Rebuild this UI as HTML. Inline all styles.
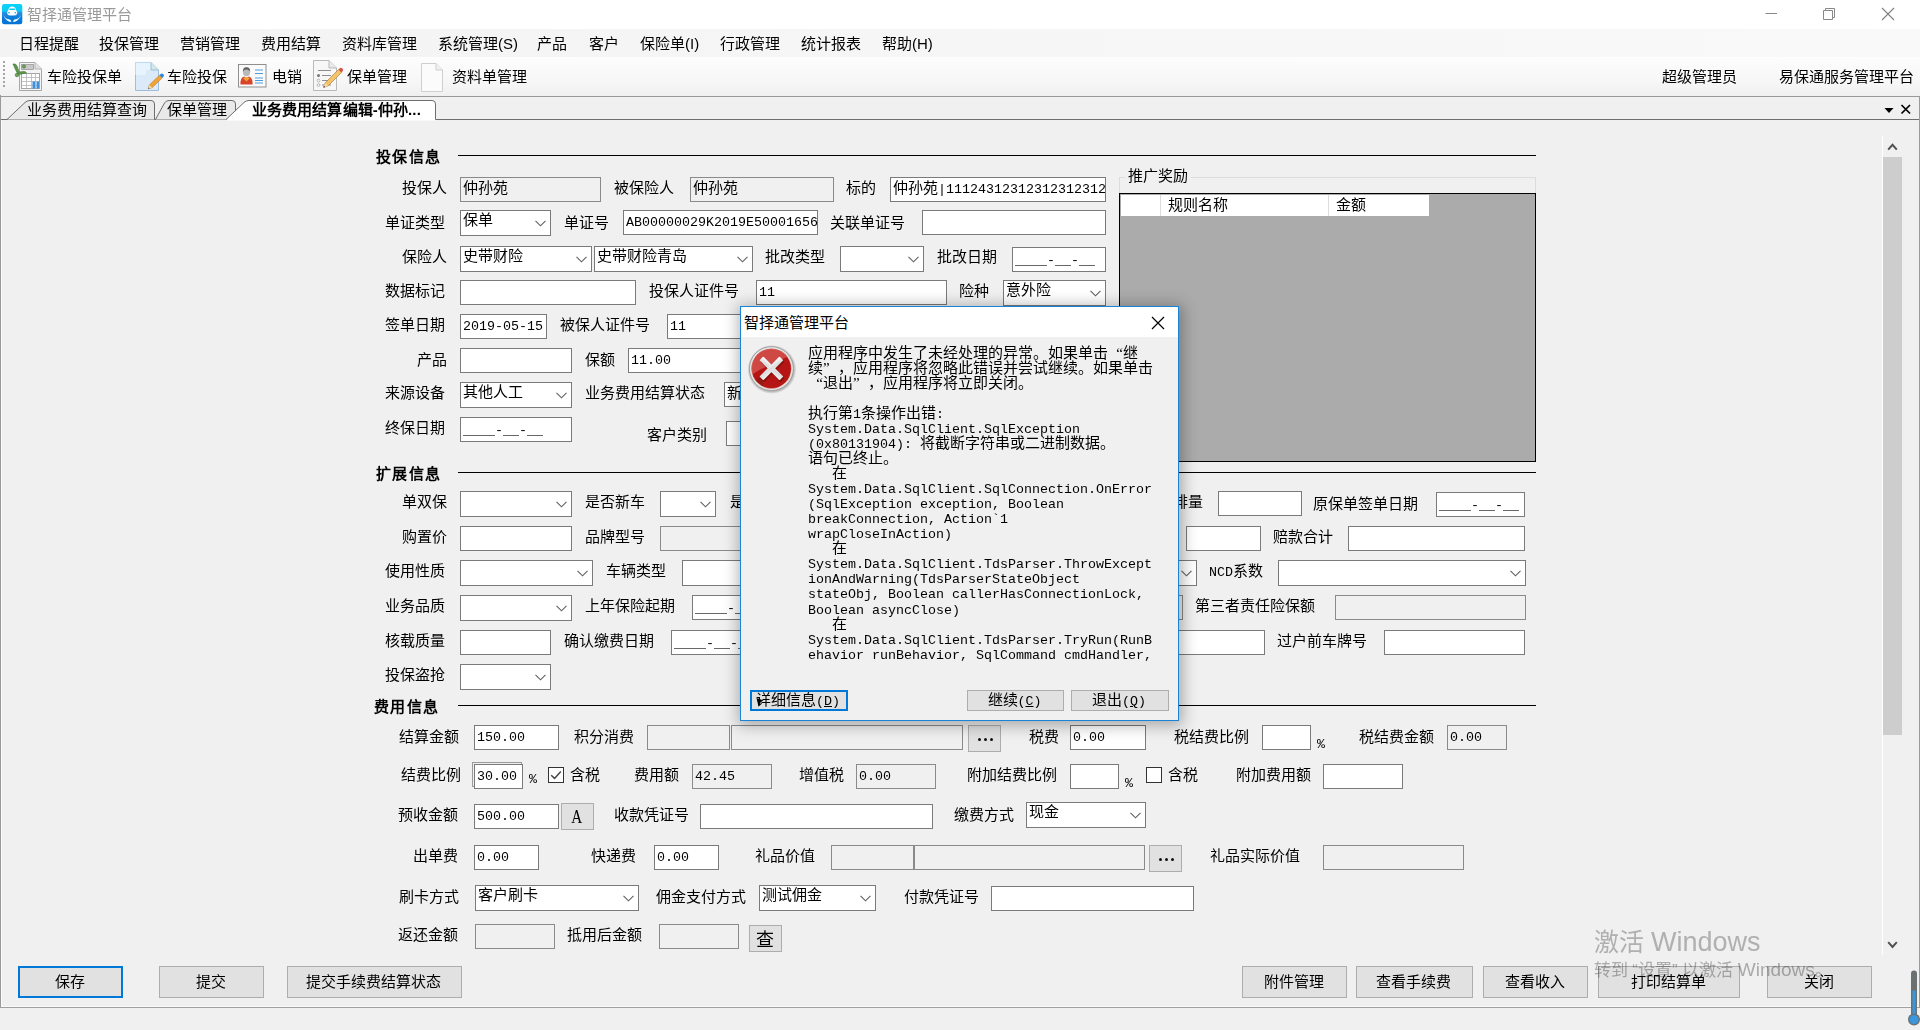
<!DOCTYPE html>
<html lang="zh-CN"><head><meta charset="utf-8"><title>智择通管理平台</title>
<style>
html,body{margin:0;padding:0}
body{width:1920px;height:1030px;overflow:hidden;background:#f0f0f0;position:relative;font-family:"Liberation Sans",sans-serif;color:#000}
.abs{position:absolute}
.l{position:absolute;font:15px/18px "Liberation Serif",serif;height:18px;white-space:nowrap;color:#000}
.m{font-family:"Liberation Mono",monospace;font-size:13.34px}
.pc .m{font-size:13.34px}
.dt3{position:absolute;top:12px;width:3px;height:3px;border-radius:1.5px;background:#111}
.h{position:absolute;font:bold 15px/18px "Liberation Serif",serif;height:18px;white-space:nowrap;letter-spacing:1.3px}
.i{position:absolute;box-sizing:border-box;border:1px solid #7a7a7a;background:#fff;overflow:hidden;font:15px/18px "Liberation Serif",serif;white-space:nowrap}
.i .t{position:absolute;left:2px;top:1px}
.i.c .t{top:0px}
.i.dt .t{top:2px}
.i.d{background:#f0f0f0;border-color:#8a8a8a}
.ar{position:absolute;right:4px;top:9px}
.b{position:absolute;box-sizing:border-box;border:1px solid #adadad;background:#e1e1e1;text-align:center;font:15px "Liberation Sans",sans-serif;white-space:nowrap;overflow:hidden;padding-right:2px}
.b.f{border:2px solid #0078d7;}
.b.f span{position:relative;top:-1px}
.dots{font-size:9px;letter-spacing:0px;position:relative;top:-1px}
.k{position:absolute;width:16px;height:16px;box-sizing:border-box;border:1px solid #333;background:#fff}
.menu span{position:absolute;top:34px;font:15px/20px "Liberation Sans",sans-serif;white-space:nowrap}
.tb span{position:absolute;top:67px;font:15px/20px "Liberation Sans",sans-serif;white-space:nowrap}
.q{display:inline-block;width:15px}.q.o{text-align:right}.q.c{text-align:left}
.dl{position:absolute;left:67px;height:16px;font:15px/16px "Liberation Serif",serif;white-space:pre}
</style></head><body>
<!-- title bar -->
<div class="abs" style="left:0;top:0;width:1920px;height:29px;background:#fff"></div>
<svg class="abs" style="left:2px;top:4px" width="21" height="21" viewBox="0 0 21 21">
<defs><linearGradient id="ig" x1="0" y1="0" x2="0" y2="1"><stop offset="0" stop-color="#0ad2fa"/><stop offset="0.36" stop-color="#0ccaf6"/><stop offset="0.40" stop-color="#2f8fe0"/><stop offset="0.7" stop-color="#0a7cdc"/><stop offset="1" stop-color="#0073d4"/></linearGradient></defs>
<rect x="0" y="0" width="20.300" height="20.3" rx="2.200" fill="url(#ig)"/>
<path d="M6.200 6.5 Q6.8 2.600 10.200 2.600 Q13.600 2.6 14.200 6.500 L15.200 8 L15.200 9.6 Q14.6 11 13 11.500 L7.4 11.5 Q5.800 11 5.2 9.600 L5.2 8 Z" fill="#fff"/>
<rect x="7.300" y="4.600" width="5.800" height="1.500" rx="0.500" fill="#10c4f5"/>
<rect x="6.300" y="8" width="1.500" height="1.400" fill="#18b8f2"/><rect x="12.600" y="8" width="1.500" height="1.400" fill="#18b8f2"/>
<path d="M1.200 10.200 Q2.600 14.800 8 15.600 L9.600 17.600 L8.200 18 Q3 16.500 1.200 10.200Z" fill="#fff" opacity="0.950"/>
<path d="M19.200 10.200 Q17.800 14.800 12.400 15.600 L10.800 17.600 L12.200 18 Q17.400 16.500 19.200 10.200Z" fill="#fff" opacity="0.950"/>
<path d="M7.400 11.5 Q10.200 13 13 11.500 L12 13 Q10.200 13.800 8.400 13Z" fill="#0a78d8"/>
</svg>
<div class="abs" style="left:27px;top:5px;font:15px/20px 'Liberation Sans',sans-serif;color:#999">智择通管理平台</div>
<svg class="abs" style="left:1760px;top:4px" width="150" height="22" viewBox="0 0 150 22">
<path d="M5.5 9.5 H17" stroke="#888" stroke-width="1" fill="none"/>
<path d="M63.5 6.5 h9 v9 h-9 z M65.5 6.500 v-2 h9 v9 h-2" stroke="#888" stroke-width="1" fill="none"/>
<path d="M122 4 L134 16 M134 4 L122 16" stroke="#808080" stroke-width="1.1" fill="none"/>
</svg>
<!-- menu bar -->
<div class="abs" style="left:0;top:29px;width:1920px;height:28px;background:linear-gradient(90deg,#f3f3f3,#f9f9f9)"></div>
<div class="menu">
<span style="left:19px">日程提醒</span><span style="left:99px">投保管理</span><span style="left:180px">营销管理</span><span style="left:261px">费用结算</span><span style="left:342px">资料库管理</span><span style="left:438px">系统管理(S)</span><span style="left:537px">产品</span><span style="left:589px">客户</span><span style="left:640px">保险单(I)</span><span style="left:720px">行政管理</span><span style="left:801px">统计报表</span><span style="left:882px">帮助(H)</span>
</div>
<!-- toolbar -->
<div class="abs" style="left:0;top:57px;width:1920px;height:39px;background:linear-gradient(#fdfdfd,#f7f7f7 60%,#f0f0f0)"></div>
<div class="abs" style="left:0;top:96px;width:1920px;height:1px;background:#999"></div>
<div class="abs" style="left:3px;top:61px;width:2px;height:27px;background:repeating-linear-gradient(#a5a5a5 0 2px,transparent 2px 4px)"></div>
<div class="tb">
<span style="left:47px">车险投保单</span><span style="left:167px">车险投保</span><span style="left:272px">电销</span><span style="left:347px">保单管理</span><span style="left:452px">资料单管理</span><span style="left:1662px">超级管理员</span><span style="left:1779px">易保通服务管理平台</span>
</div>

<!-- icon1: spreadsheet -->
<svg class="abs" style="left:12px;top:61px" width="31" height="31" viewBox="0 0 31 31">
<path d="M7.5 1.500 H23 L29.5 8 V29.5 H7.5 Z" fill="#f4f4f4" stroke="#a8a8a8" stroke-width="1"/>
<path d="M23 1.5 V8 H29.5" fill="#e2e2e2" stroke="#b4b4b4" stroke-width="1"/>
<rect x="9.500" y="3.5" width="12" height="5" fill="#c9c9c9" stroke="#9a9a9a" stroke-width="0.8"/>
<rect x="9.5" y="12.500" width="18" height="15" fill="#fff" stroke="#9c9c9c" stroke-width="0.9"/>
<path d="M9.5 16.5 H27.5 M9.500 20.5 H27.5 M9.5 24.5 H27.5 M14.500 12.5 V27.5 M19.5 12.5 V27.5 M23.5 12.5 V27.5" stroke="#b5b5b5" stroke-width="0.8" fill="none"/>
<rect x="20.5" y="20.500" width="2.600" height="7" fill="#3f8fdd"/><rect x="24.5" y="20.5" width="2.6" height="7" fill="#3f8fdd"/>
<path d="M1 3 Q4 2 5.5 6 L7 11 L12 10.500 Q14 10.5 14.5 12 L9 13 L6 13.5 Q3.5 9 1 3Z" fill="#5d9a4a" stroke="#3f6f33" stroke-width="0.6"/>
<circle cx="5" cy="14" r="1.800" fill="#6aa556" stroke="#3f6f33" stroke-width="0.6"/><circle cx="12" cy="5.5" r="1.6" fill="#6aa556" stroke="#3f6f33" stroke-width="0.6"/>
</svg>
<!-- icon2: page with pencil -->
<svg class="abs" style="left:134px;top:61px" width="31" height="32" viewBox="0 0 31 32">
<path d="M1.500 1.5 H17 L24.5 9 V29.5 H1.5 Z" fill="#dbeaf8" stroke="#9dbfdc" stroke-width="1"/>
<path d="M1.5 1.500 H17 V9 H12 V14 H1.5Z" fill="#e8f5fd" opacity="0.9"/>
<path d="M17 1.5 V9 H24.5" fill="#cfe9e4" stroke="#9dbfdc" stroke-width="1"/>
<path d="M14.2 27.8 L15.3 24 L25.5 14.2 L28.2 17 L18 26.700 Z" fill="#f0a23c" stroke="#c57a1e" stroke-width="0.6"/>
<path d="M25.5 14.2 L27 12.800 Q28 12 29 13 L29.6 13.600 Q30.4 14.6 29.6 15.5 L28.2 17Z" fill="#2f86e0"/>
<path d="M14.200 27.8 L15.3 24 L18 26.7Z" fill="#f3dcb5"/><path d="M14.2 27.8 L14.6 26.400 L15.6 27.4Z" fill="#333"/>
</svg>
<!-- icon3: contact card -->
<svg class="abs" style="left:238px;top:64px" width="29" height="25" viewBox="0 0 29 25">
<rect x="0.5" y="0.5" width="27.5" height="22.500" fill="#fafafa" stroke="#8f8f8f" stroke-width="1"/>
<path d="M17 6 H25 M17 9.500 H25 M17 14 H25 M17 16.5 H25 M17 19 H25" stroke="#4e9bd8" stroke-width="1.1" fill="none"/>
<path d="M2.500 20.5 Q2 14 6 12.5 L8.5 14 L11 12.5 Q15 14 14.5 20.5 Z" fill="#d8432a"/>
<path d="M5 14 L8.500 17.500 L12 14 L8.5 13Z" fill="#f0a23c"/>
<ellipse cx="8.5" cy="8" rx="3.600" ry="4.200" fill="#b9b9b9"/><path d="M4.8 7.500 Q5 3 8.500 3.200 Q12 3 12.2 7.5 Q10 5 8.5 5.500 Q6.5 5 4.8 7.5Z" fill="#5f5f5f"/>
</svg>
<!-- icon4: list page + pencil -->
<svg class="abs" style="left:312px;top:60px" width="32" height="32" viewBox="0 0 32 32">
<path d="M1.5 0.500 H17 L24.5 8 V30.5 H1.5 Z" fill="#f7f7f7" stroke="#b9b9b9" stroke-width="1"/>
<path d="M17 0.5 V8 H24.5" fill="#e9e9e9" stroke="#b9b9b9" stroke-width="1"/>
<path d="M6 10.5 H19 M10 15.500 H19 M10 20.5 H19 M10 25 H19" stroke="#8e8e8e" stroke-width="1.2" fill="none"/>
<circle cx="6.500" cy="15.5" r="1.5" fill="#777"/><circle cx="6.5" cy="20.500" r="1.4" fill="#fff" stroke="#999" stroke-width="0.7"/><circle cx="6.5" cy="25" r="1.400" fill="#fff" stroke="#999" stroke-width="0.700"/>
<path d="M11.500 27.5 L13 23 L26.500 9.500 L29.500 12.500 L16 26 Z" fill="#f3c36b" stroke="#a8772c" stroke-width="0.6"/>
<path d="M26.5 9.5 L28 8 Q29 7.200 30 8.200 L30.800 9 Q31.5 10 30.800 11 L29.5 12.5Z" fill="#d9534f"/>
<path d="M11.5 27.500 L13 23 L16 26Z" fill="#f3dcb5"/><path d="M11.5 27.5 L12 25.800 L13.200 27Z" fill="#333"/>
</svg>
<!-- icon5: blank page -->
<svg class="abs" style="left:420px;top:63px" width="24" height="30" viewBox="0 0 24 30">
<path d="M1.500 0.5 H16 L22.5 7 V28.500 H1.5 Z" fill="#fbfbfb" stroke="#cfcfcf" stroke-width="1"/>
<path d="M16 0.500 V7 H22.5" fill="#f0f0f0" stroke="#cfcfcf" stroke-width="1"/>
</svg>

<!-- tab strip -->
<div class="abs" style="left:0;top:97px;width:1920px;height:23px;background:#f0f0f0"></div>
<svg class="abs" style="left:0;top:97px" width="1920" height="24" viewBox="0 0 1920 24">
<path d="M0 22.5 H1920" stroke="#6e6e6e" stroke-width="1" fill="none"/>
<path d="M7 22.5 L25 5.5 Q27 3.5 30 3.5 H151 Q154.5 3.5 154.5 7 V22.5" fill="#e9e9e9" stroke="#6e6e6e" stroke-width="1"/>
<path d="M155.500 22.5 L164.500 6 Q166 3.5 169 3.5 H232 Q235.500 3.5 235.5 7 V22.5" fill="#e9e9e9" stroke="#6e6e6e" stroke-width="1"/>
<path d="M226 23.500 L244 5.5 Q246 3.5 249 3.5 H432 Q435.5 3.5 435.5 7 V23.5 Z" fill="#fff" stroke="none"/>
<path d="M226 22.5 L244 5.5 Q246 3.5 249 3.5 H432 Q435.5 3.5 435.5 7 V22.5" fill="none" stroke="#6e6e6e" stroke-width="1"/>
<path d="M1884.500 11 h9 l-4.500 5 z" fill="#000"/>
<path d="M1901.500 8 l8.500 8.500 m0 -8.500 l-8.500 8.500" stroke="#000" stroke-width="1.700" fill="none"/>
</svg>
<div class="abs" style="left:27px;top:100px;font:15px/20px 'Liberation Sans',sans-serif;white-space:nowrap">业务费用结算查询</div>
<div class="abs" style="left:167px;top:100px;font:15px/20px 'Liberation Sans',sans-serif;white-space:nowrap">保单管理</div>
<div class="abs" style="left:252px;top:100px;font:bold 15px/20px 'Liberation Sans',sans-serif;letter-spacing:0.1px;white-space:nowrap">业务费用结算编辑-仲孙...</div>
<!-- page frame -->
<div class="abs" style="left:0px;top:95px;width:1px;height:913px;background:#9a9a9a"></div><div class="abs" style="left:1px;top:120px;width:1px;height:887px;background:#fafafa"></div>
<div class="abs" style="left:1px;top:1006px;width:1919px;height:1px;background:#fafafa"></div><div class="abs" style="left:0px;top:1007px;width:1920px;height:1px;background:#a0a0a0"></div>
<!-- scrollbar -->
<div class="abs" style="left:1882px;top:136px;width:1px;height:819px;background:#fff"></div>
<div class="abs" style="left:1883px;top:157px;width:19px;height:578px;background:#cdcdcd"></div>
<svg class="abs" style="left:1883px;top:136px" width="19" height="820" viewBox="0 0 19 820"><path d="M5.200 13.600 L9.5 8.800 L13.800 13.600" stroke="#505050" stroke-width="2" fill="none"/><path d="M5.200 6.200 L9.5 11 L13.800 6.200" transform="translate(0 800)" stroke="#505050" stroke-width="2" fill="none"/></svg>
<div class="abs" style="left:1919px;top:96px;width:1px;height:912px;background:#9a9a9a"></div>
<div class="h" style="left:376px;top:148px">投保信息</div>
<div style="position:absolute;left:458px;top:155px;width:1078px;height:1px;background:#000"></div>
<div class="l " style="right:1473px;top:179px">投保人</div>
<div class="i d" style="left:460px;top:177px;width:141px;height:25px"><span class="t">仲孙苑</span></div>
<div class="l " style="left:614px;top:179px">被保险人</div>
<div class="i d" style="left:690px;top:177px;width:144px;height:25px"><span class="t">仲孙苑</span></div>
<div class="l " style="left:846px;top:179px">标的</div>
<div class="i" style="left:890px;top:177px;width:216px;height:25px"><span class="t">仲孙苑<span class="m">|111243123123123123123</span></span></div>
<div class="l " style="right:1475px;top:214px">单证类型</div>
<div class="i c" style="left:460px;top:210px;width:91px;height:26px"><span class="t">保单</span><svg class="ar" width="11" height="7" viewBox="0 0 11 7"><path d="M0.5 0.8 L5.5 5.8 L10.5 0.8" fill="none" stroke="#606060" stroke-width="1.1"/></svg></div>
<div class="l " style="left:564px;top:214px">单证号</div>
<div class="i" style="left:623px;top:210px;width:195px;height:25px"><span class="t"><span class="m">AB00000029K2019E500016567</span></span></div>
<div class="l " style="left:830px;top:214px">关联单证号</div>
<div class="i" style="left:922px;top:210px;width:184px;height:25px"><span class="t"></span></div>
<div class="l " style="right:1473px;top:248px">保险人</div>
<div class="i c" style="left:460px;top:246px;width:132px;height:26px"><span class="t">史带财险</span><svg class="ar" width="11" height="7" viewBox="0 0 11 7"><path d="M0.5 0.8 L5.5 5.8 L10.5 0.8" fill="none" stroke="#606060" stroke-width="1.1"/></svg></div>
<div class="i c" style="left:594px;top:246px;width:159px;height:26px"><span class="t">史带财险青岛</span><svg class="ar" width="11" height="7" viewBox="0 0 11 7"><path d="M0.5 0.8 L5.5 5.8 L10.5 0.8" fill="none" stroke="#606060" stroke-width="1.1"/></svg></div>
<div class="l " style="left:765px;top:248px">批改类型</div>
<div class="i c" style="left:840px;top:246px;width:84px;height:26px"><span class="t"></span><svg class="ar" width="11" height="7" viewBox="0 0 11 7"><path d="M0.5 0.8 L5.5 5.8 L10.5 0.8" fill="none" stroke="#606060" stroke-width="1.1"/></svg></div>
<div class="l " style="left:937px;top:248px">批改日期</div>
<div class="i dt" style="left:1012px;top:247px;width:94px;height:25px"><span class="t"><span class="m">____-__-__</span></span></div>
<div class="l " style="right:1475px;top:282px">数据标记</div>
<div class="i" style="left:460px;top:280px;width:176px;height:25px"><span class="t"></span></div>
<div class="l " style="left:649px;top:282px">投保人证件号</div>
<div class="i" style="left:756px;top:280px;width:191px;height:25px"><span class="t"><span class="m">11</span></span></div>
<div class="l " style="left:959px;top:282px">险种</div>
<div class="i c" style="left:1003px;top:280px;width:103px;height:26px"><span class="t">意外险</span><svg class="ar" width="11" height="7" viewBox="0 0 11 7"><path d="M0.5 0.8 L5.5 5.8 L10.5 0.8" fill="none" stroke="#606060" stroke-width="1.1"/></svg></div>
<div class="l " style="right:1475px;top:316px">签单日期</div>
<div class="i" style="left:460px;top:314px;width:87px;height:25px"><span class="t"><span class="m">2019-05-15</span></span></div>
<div class="l " style="left:560px;top:316px">被保人证件号</div>
<div class="i" style="left:667px;top:314px;width:133px;height:25px"><span class="t"><span class="m">11</span></span></div>
<div class="l " style="right:1473.5px;top:351px">产品</div>
<div class="i" style="left:460px;top:348px;width:112px;height:25px"><span class="t"></span></div>
<div class="l " style="left:585px;top:351px">保额</div>
<div class="i" style="left:628px;top:348px;width:172px;height:25px"><span class="t"><span class="m">11.00</span></span></div>
<div class="l " style="right:1475px;top:384px">来源设备</div>
<div class="i c" style="left:460px;top:382px;width:112px;height:26px"><span class="t">其他人工</span><svg class="ar" width="11" height="7" viewBox="0 0 11 7"><path d="M0.5 0.8 L5.5 5.8 L10.5 0.8" fill="none" stroke="#606060" stroke-width="1.1"/></svg></div>
<div class="l " style="left:585px;top:384px">业务费用结算状态</div>
<div class="i" style="left:724px;top:382px;width:76px;height:25px"><span class="t">新</span></div>
<div class="l " style="right:1475px;top:419px">终保日期</div>
<div class="i dt" style="left:460px;top:417px;width:112px;height:25px"><span class="t"><span class="m">____-__-__</span></span></div>
<div class="l " style="left:647px;top:426px">客户类别</div>
<div class="i" style="left:726px;top:421px;width:74px;height:25px"><span class="t"></span></div>
<div style="position:absolute;left:1119px;top:177px;width:417px;height:280px;border:1px solid #dcdcdc;box-sizing:border-box"></div>
<div class="l" style="left:1125px;top:166.500px;background:#f0f0f0;padding:0 3px">推广奖励</div>
<div style="position:absolute;left:1119px;top:193px;width:417px;height:269px;background:#ababab;border:1px solid #000;box-sizing:border-box"></div>
<div style="position:absolute;left:1121px;top:195px;width:308px;height:21px;background:#fff"></div>
<div style="position:absolute;left:1160px;top:195px;width:1px;height:21px;background:#dcdcdc"></div>
<div style="position:absolute;left:1328px;top:195px;width:1px;height:21px;background:#dcdcdc"></div>
<div class="l " style="left:1168px;top:196px">规则名称</div>
<div class="l " style="left:1336px;top:196px">金额</div>
<div class="h" style="left:376px;top:465px">扩展信息</div>
<div style="position:absolute;left:458px;top:472px;width:1078px;height:1px;background:#000"></div>
<div class="l " style="right:1473px;top:493px">单双保</div>
<div class="i c" style="left:460px;top:491px;width:112px;height:26px"><span class="t"></span><svg class="ar" width="11" height="7" viewBox="0 0 11 7"><path d="M0.5 0.8 L5.5 5.8 L10.5 0.8" fill="none" stroke="#606060" stroke-width="1.1"/></svg></div>
<div class="l " style="left:585px;top:493px">是否新车</div>
<div class="i c" style="left:660px;top:491px;width:56px;height:26px"><span class="t"></span><svg class="ar" width="11" height="7" viewBox="0 0 11 7"><path d="M0.5 0.8 L5.5 5.8 L10.5 0.8" fill="none" stroke="#606060" stroke-width="1.1"/></svg></div>
<div class="l " style="left:730px;top:493px">是否</div>
<div class="l " style="right:717.0px;top:493px">排量</div>
<div class="i" style="left:1218px;top:491px;width:84px;height:25px"><span class="t"></span></div>
<div class="l " style="left:1313px;top:494.5px">原保单签单日期</div>
<div class="i dt" style="left:1436px;top:492px;width:89px;height:25px"><span class="t"><span class="m">____-__-__</span></span></div>
<div class="l " style="right:1473px;top:528px">购置价</div>
<div class="i" style="left:460px;top:526px;width:112px;height:25px"><span class="t"></span></div>
<div class="l " style="left:585px;top:528px">品牌型号</div>
<div class="i d" style="left:660px;top:526px;width:140px;height:25px"><span class="t"></span></div>
<div class="i" style="left:1186px;top:526px;width:75px;height:25px"><span class="t"></span></div>
<div class="l " style="left:1273px;top:528px">赔款合计</div>
<div class="i" style="left:1348px;top:526px;width:177px;height:25px"><span class="t"></span></div>
<div class="l " style="right:1475px;top:562px">使用性质</div>
<div class="i c" style="left:460px;top:560px;width:133px;height:26px"><span class="t"></span><svg class="ar" width="11" height="7" viewBox="0 0 11 7"><path d="M0.5 0.8 L5.5 5.8 L10.5 0.8" fill="none" stroke="#606060" stroke-width="1.1"/></svg></div>
<div class="l " style="left:606px;top:562px">车辆类型</div>
<div class="i c" style="left:682px;top:560px;width:515px;height:26px"><span class="t"></span><svg class="ar" width="11" height="7" viewBox="0 0 11 7"><path d="M0.5 0.8 L5.5 5.8 L10.5 0.8" fill="none" stroke="#606060" stroke-width="1.1"/></svg></div>
<div class="l " style="left:1209px;top:562px"><span class="m">NCD</span>系数</div>
<div class="i c" style="left:1278px;top:560px;width:248px;height:26px"><span class="t"></span><svg class="ar" width="11" height="7" viewBox="0 0 11 7"><path d="M0.5 0.8 L5.5 5.8 L10.5 0.8" fill="none" stroke="#606060" stroke-width="1.1"/></svg></div>
<div class="l " style="right:1475px;top:597px">业务品质</div>
<div class="i c" style="left:460px;top:595px;width:112px;height:26px"><span class="t"></span><svg class="ar" width="11" height="7" viewBox="0 0 11 7"><path d="M0.5 0.8 L5.5 5.8 L10.5 0.8" fill="none" stroke="#606060" stroke-width="1.1"/></svg></div>
<div class="l " style="left:585px;top:597px">上年保险起期</div>
<div class="i dt" style="left:692px;top:595px;width:108px;height:25px"><span class="t"><span class="m">____-__-__</span></span></div>
<div class="i d" style="left:1100px;top:595px;width:83px;height:25px"><span class="t"></span></div>
<div class="l " style="left:1195px;top:597px">第三者责任险保额</div>
<div class="i d" style="left:1335px;top:595px;width:191px;height:25px"><span class="t"></span></div>
<div class="l " style="right:1475px;top:632px">核载质量</div>
<div class="i" style="left:460px;top:630px;width:91px;height:25px"><span class="t"></span></div>
<div class="l " style="left:564px;top:632px">确认缴费日期</div>
<div class="i dt" style="left:671px;top:630px;width:129px;height:25px"><span class="t"><span class="m">____-__-__</span></span></div>
<div class="i" style="left:1100px;top:630px;width:165px;height:25px"><span class="t"></span></div>
<div class="l " style="left:1277px;top:632px">过户前车牌号</div>
<div class="i" style="left:1384px;top:630px;width:141px;height:25px"><span class="t"></span></div>
<div class="l " style="right:1475px;top:666px">投保盗抢</div>
<div class="i c" style="left:460px;top:664px;width:91px;height:26px"><span class="t"></span><svg class="ar" width="11" height="7" viewBox="0 0 11 7"><path d="M0.5 0.8 L5.5 5.8 L10.5 0.8" fill="none" stroke="#606060" stroke-width="1.1"/></svg></div>
<div class="h" style="left:374px;top:698px">费用信息</div>
<div style="position:absolute;left:458px;top:705px;width:1078px;height:1px;background:#000"></div>
<div class="l " style="left:399px;top:728px">结算金额</div>
<div class="i" style="left:474px;top:725px;width:85px;height:25px"><span class="t"><span class="m">150.00</span></span></div>
<div class="l " style="left:574px;top:728px">积分消费</div>
<div class="i d" style="left:647px;top:725px;width:83px;height:25px"><span class="t"></span></div>
<div class="i d" style="left:731px;top:725px;width:232px;height:25px"><span class="t"></span></div>
<div class="b " style="left:968px;top:725px;width:33px;height:27px;line-height:25px;"><i class="dt3" style="left:9px"></i><i class="dt3" style="left:15px"></i><i class="dt3" style="left:21px"></i></div>
<div class="l " style="left:1029px;top:728px">税费</div>
<div class="i" style="left:1070px;top:725px;width:76px;height:25px"><span class="t"><span class="m">0.00</span></span></div>
<div class="l " style="left:1174px;top:728px">税结费比例</div>
<div class="i" style="left:1262px;top:725px;width:49px;height:25px"><span class="t"></span></div>
<div class="l pc" style="left:1317px;top:733.7px"><span class="m">%</span></div>
<div class="l " style="left:1359px;top:728px">税结费金额</div>
<div class="i d" style="left:1447px;top:725px;width:60px;height:25px"><span class="t"><span class="m">0.00</span></span></div>
<div class="l " style="left:401px;top:766px">结费比例</div>
<div class="i" style="left:472px;top:762px;width:50px;height:25px;border-color:#9a9a9a;background:#f0f0f0"></div>
<div class="i" style="left:474px;top:764px;width:49px;height:25px"><span class="t"><span class="m">30.00</span></span></div>
<div class="l pc" style="left:529px;top:768.5px"><span class="m">%</span></div>
<div class="k" style="left:548px;top:767px"><svg width="16" height="16" viewBox="0 0 16 16" style="position:absolute;left:-1px;top:-1px"><path d="M3.2 8.2 L6.6 11.4 L12.8 4.6" fill="none" stroke="#444" stroke-width="1.5"/></svg></div>
<div class="l " style="left:570px;top:766px">含税</div>
<div class="l " style="left:634px;top:766px">费用额</div>
<div class="i d" style="left:692px;top:764px;width:80px;height:25px"><span class="t"><span class="m">42.45</span></span></div>
<div class="l " style="left:799px;top:766px">增值税</div>
<div class="i d" style="left:856px;top:764px;width:80px;height:25px"><span class="t"><span class="m">0.00</span></span></div>
<div class="l " style="left:967px;top:766px">附加结费比例</div>
<div class="i" style="left:1070px;top:764px;width:49px;height:25px"><span class="t"></span></div>
<div class="l pc" style="left:1125px;top:772.7px"><span class="m">%</span></div>
<div class="k" style="left:1146px;top:767px"></div>
<div class="l " style="left:1168px;top:766px">含税</div>
<div class="l " style="left:1236px;top:766px">附加费用额</div>
<div class="i" style="left:1323px;top:764px;width:80px;height:25px"><span class="t"></span></div>
<div class="l " style="left:398px;top:806px">预收金额</div>
<div class="i" style="left:474px;top:804px;width:85px;height:25px"><span class="t"><span class="m">500.00</span></span></div>
<div class="b " style="left:561px;top:803px;width:33px;height:27px;line-height:25px;font:19px 'Liberation Serif',serif;"><span style="position:relative;top:2px;display:inline-block;transform:scaleX(0.8)">A</span></div>
<div class="l " style="left:614px;top:806px">收款凭证号</div>
<div class="i" style="left:700px;top:804px;width:233px;height:25px"><span class="t"></span></div>
<div class="l " style="left:954px;top:806px">缴费方式</div>
<div class="i c" style="left:1026px;top:802px;width:120px;height:26px"><span class="t">现金</span><svg class="ar" width="11" height="7" viewBox="0 0 11 7"><path d="M0.5 0.8 L5.5 5.8 L10.5 0.8" fill="none" stroke="#606060" stroke-width="1.1"/></svg></div>
<div class="l " style="left:413px;top:847px">出单费</div>
<div class="i" style="left:474px;top:845px;width:65px;height:25px"><span class="t"><span class="m">0.00</span></span></div>
<div class="l " style="left:591px;top:847px">快递费</div>
<div class="i" style="left:654px;top:845px;width:65px;height:25px"><span class="t"><span class="m">0.00</span></span></div>
<div class="l " style="left:755px;top:847px">礼品价值</div>
<div class="i d" style="left:831px;top:845px;width:83px;height:25px"><span class="t"></span></div>
<div class="i d" style="left:914px;top:845px;width:231px;height:25px"><span class="t"></span></div>
<div class="b " style="left:1149px;top:845px;width:33px;height:27px;line-height:25px;"><i class="dt3" style="left:9px"></i><i class="dt3" style="left:15px"></i><i class="dt3" style="left:21px"></i></div>
<div class="l " style="left:1210px;top:847px">礼品实际价值</div>
<div class="i d" style="left:1323px;top:845px;width:141px;height:25px"><span class="t"></span></div>
<div class="l " style="left:399px;top:888px">刷卡方式</div>
<div class="i c" style="left:475px;top:885px;width:164px;height:26px"><span class="t">客户刷卡</span><svg class="ar" width="11" height="7" viewBox="0 0 11 7"><path d="M0.5 0.8 L5.5 5.8 L10.5 0.8" fill="none" stroke="#606060" stroke-width="1.1"/></svg></div>
<div class="l " style="left:656px;top:888px">佣金支付方式</div>
<div class="i c" style="left:759px;top:885px;width:117px;height:26px"><span class="t">测试佣金</span><svg class="ar" width="11" height="7" viewBox="0 0 11 7"><path d="M0.5 0.8 L5.5 5.8 L10.5 0.8" fill="none" stroke="#606060" stroke-width="1.1"/></svg></div>
<div class="l " style="left:904px;top:888px">付款凭证号</div>
<div class="i" style="left:991px;top:886px;width:203px;height:25px"><span class="t"></span></div>
<div class="l " style="left:398px;top:926px">返还金额</div>
<div class="i d" style="left:475px;top:924px;width:80px;height:25px"><span class="t"></span></div>
<div class="l " style="left:567px;top:926px">抵用后金额</div>
<div class="i d" style="left:659px;top:924px;width:80px;height:25px"><span class="t"></span></div>
<div class="b " style="left:749px;top:925px;width:33px;height:27px;line-height:25px;font:18px 'Liberation Sans',sans-serif;"><span style="position:relative;top:-1px">查</span></div>
<div class="b f" style="left:18px;top:966px;width:105px;height:32px;line-height:30px;"><span>保存</span></div>
<div class="b " style="left:159px;top:966px;width:105px;height:32px;line-height:30px;">提交</div>
<div class="b " style="left:287px;top:966px;width:175px;height:32px;line-height:30px;">提交手续费结算状态</div>
<div class="b " style="left:1242px;top:966px;width:105px;height:32px;line-height:30px;">附件管理</div>
<div class="b " style="left:1356px;top:966px;width:117px;height:32px;line-height:30px;">查看手续费</div>
<div class="b " style="left:1483px;top:966px;width:105px;height:32px;line-height:30px;">查看收入</div>
<div class="b " style="left:1598px;top:966px;width:142px;height:32px;line-height:30px;">打印结算单</div>
<div class="b " style="left:1767px;top:966px;width:105px;height:32px;line-height:30px;">关闭</div>
<!-- watermark -->
<div class="abs" style="left:1594px;top:926px;font:25px/32px 'Liberation Sans',sans-serif;color:#b0b0b0;white-space:nowrap">激活 <span style="font-size:27px">Windows</span></div>
<div class="abs" style="left:1594px;top:959px;font:17px/22px 'Liberation Sans',sans-serif;color:#b6b6b6;white-space:nowrap;mix-blend-mode:multiply">转到<span class="q o" style="width:10px">“</span>设置<span class="q c" style="width:10px">”</span>以激活 <span style="font-size:19px">Windows</span>。</div>
<!-- odd blue slider bottom-right -->
<svg class="abs" style="left:1904px;top:966px" width="16" height="64" viewBox="0 0 16 64">
<rect x="7" y="4.500" width="6" height="50" rx="3" fill="#6b7072"/>
<rect x="8.500" y="24.500" width="3" height="30" fill="#3a96dd"/>
<circle cx="10" cy="53.500" r="6" fill="#6b7072"/><circle cx="10" cy="53.500" r="4.600" fill="#3a96dd"/>
</svg>
<!-- dialog -->
<div class="abs" style="left:740px;top:306px;width:439px;height:415px;box-sizing:border-box;border:1px solid #1883d7;background:#f0f0f0;box-shadow:1px 2px 14px 3px rgba(0,0,0,0.29)">
<div class="abs" style="left:0;top:0;width:437px;height:30px;background:#fff"></div>
<div class="abs" style="left:3px;top:6px;font:15px/20px 'Liberation Sans',sans-serif;white-space:nowrap">智择通管理平台</div>
<svg class="abs" style="left:410px;top:9px" width="14" height="14" viewBox="0 0 14 14"><path d="M1 1 L13 13 M13 1 L1 13" stroke="#000" stroke-width="1.2" fill="none"/></svg>
<svg class="abs" style="left:6px;top:37px" width="50" height="50" viewBox="0 0 50 50">
<defs><linearGradient id="xg" x1="0" y1="0" x2="1" y2="1"><stop offset="0" stop-color="#ffffff"/><stop offset="0.5" stop-color="#dcdcdc"/><stop offset="1" stop-color="#f2f2f2"/></linearGradient>
<clipPath id="cc"><circle cx="24.400" cy="24.600" r="19.800"/></clipPath>
<radialGradient id="sh" cx="0.5" cy="0.5" r="0.5"><stop offset="0.88" stop-color="#000" stop-opacity="0.280"/><stop offset="1" stop-color="#000" stop-opacity="0"/></radialGradient></defs>
<circle cx="24.900" cy="25.400" r="24.500" fill="url(#sh)"/>
<circle cx="24.400" cy="24.600" r="22" fill="#e4e4e4" stroke="#9c9c9c" stroke-width="0.900"/>
<circle cx="24.400" cy="24.600" r="19.800" fill="#b61515"/>
<g clip-path="url(#cc)"><path d="M0 0 H50 V8 L40 13 Q22 20 6 30 L0 33 Z" fill="#cf4944"/><path d="M8 36 L16 32 L16 44 Z" fill="#8f1a12" opacity="0.85"/></g>
<circle cx="24.400" cy="24.600" r="19.800" fill="none" stroke="#e8a58c" stroke-width="0.700" stroke-dasharray="1 1"/>
<g transform="translate(25.400 26.200) rotate(45)"><rect x="-14.200" y="-2.700" width="28.400" height="5.400" fill="#7a1008" opacity="0.75"/><rect x="-2.700" y="-14.200" width="5.400" height="28.400" fill="#7a1008" opacity="0.75"/></g>
<g transform="translate(24.400 24.400) rotate(45)"><rect x="-14.200" y="-2.700" width="28.400" height="5.400" rx="0.800" fill="url(#xg)"/><rect x="-2.700" y="-14.200" width="5.400" height="28.400" rx="0.800" fill="url(#xg)"/></g>
</svg>
<div class="dl" style="top:37.6px">应用程序中发生了未经处理的异常。如果单击<span class="q o">“</span>继</div>
<div class="dl" style="top:52.7px">续<span class="q c">”</span>，应用程序将忽略此错误并尝试继续。如果单击</div>
<div class="dl" style="top:67.7px"><span class="q o">“</span>退出<span class="q c">”</span>，应用程序将立即关闭。</div>
<div class="dl" style="top:82.8px"></div>
<div class="dl" style="top:97.8px">执行第<span class="m">1</span>条操作出错<span class="m">:</span></div>
<div class="dl" style="top:112.9px"><span class="m">System.Data.SqlClient.SqlException</span></div>
<div class="dl" style="top:127.9px"><span class="m">(0x80131904): </span>将截断字符串或二进制数据。</div>
<div class="dl" style="top:143.0px">语句已终止。</div>
<div class="dl" style="top:158.0px"><span class="m">   </span>在</div>
<div class="dl" style="top:173.1px"><span class="m">System.Data.SqlClient.SqlConnection.OnError</span></div>
<div class="dl" style="top:188.1px"><span class="m">(SqlException exception, Boolean</span></div>
<div class="dl" style="top:203.2px"><span class="m">breakConnection, Action`1</span></div>
<div class="dl" style="top:218.2px"><span class="m">wrapCloseInAction)</span></div>
<div class="dl" style="top:233.2px"><span class="m">   </span>在</div>
<div class="dl" style="top:248.3px"><span class="m">System.Data.SqlClient.TdsParser.ThrowExcept</span></div>
<div class="dl" style="top:263.4px"><span class="m">ionAndWarning(TdsParserStateObject</span></div>
<div class="dl" style="top:278.4px"><span class="m">stateObj, Boolean callerHasConnectionLock,</span></div>
<div class="dl" style="top:293.5px"><span class="m">Boolean asyncClose)</span></div>
<div class="dl" style="top:308.5px"><span class="m">   </span>在</div>
<div class="dl" style="top:323.5px"><span class="m">System.Data.SqlClient.TdsParser.TryRun(RunB</span></div>
<div class="dl" style="top:338.6px"><span class="m">ehavior runBehavior, SqlCommand cmdHandler,</span></div>
<div class="b" style="left:9px;top:383px;width:98px;height:21px;border:2px solid #0078d7;font:15px/16px 'Liberation Serif',serif">详细信息<span class="m">(<u>D</u>)</span></div>
<div class="b" style="left:226px;top:383px;width:97px;height:21px;font:15px/18px 'Liberation Serif',serif">继续<span class="m">(<u>C</u>)</span></div>
<div class="b" style="left:330px;top:383px;width:98px;height:21px;font:15px/18px 'Liberation Serif',serif">退出<span class="m">(<u>Q</u>)</span></div>
<svg class="abs" style="left:14px;top:388px" width="10" height="12" viewBox="0 0 10 12"><path d="M1.500 3 L8.500 5.500 L5.800 7 L3.500 11.500 Z" fill="#000"/></svg>
</div>
</body></html>
